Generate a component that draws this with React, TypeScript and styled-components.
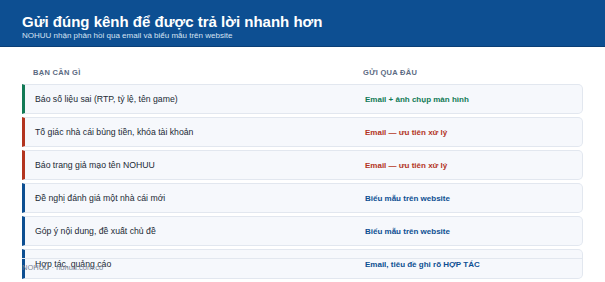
import React from 'react'
import styled, { createGlobalStyle } from 'styled-components'

const GlobalStyle = createGlobalStyle`
  html, body {
    margin: 0;
    padding: 0;
    background: #ffffff;
    font-family: "Liberation Sans", Arial, sans-serif;
  }
`

/*
 * STYLES
 */

const Page = styled.div`
  position: relative;
  width: 605px;
  height: 282px;
  overflow: hidden;
`

const Header = styled.header`
  background: #0d4f92;
  border-bottom: 1px solid #0a3f76;
  padding: 12px 22px 5px;
  height: 29px;
`

const Title = styled.h1`
  margin: 0;
  color: #ffffff;
  font-size: 15px;
  font-weight: 700;
  line-height: 19px;
`

const Subtitle = styled.p`
  margin: 0;
  color: #d6e3f3;
  font-size: 8px;
  line-height: 10px;
`

const Body = styled.main`
  padding: 21px 22px 0;
`

const HeadRow = styled.div`
  display: grid;
  grid-template-columns: 318px 1fr;
  column-gap: 12px;
  padding: 0 0 6px 11px;
`

const HeadCell = styled.div`
  font-size: 7.5px;
  font-weight: 700;
  color: #5b6a82;
  letter-spacing: 0.3px;
  text-transform: uppercase;
  line-height: 10px;
`

const List = styled.div`
  display: flex;
  flex-direction: column;
  gap: 3px;
`

const Row = styled.div<{ $accent: string }>`
  display: grid;
  grid-template-columns: 318px 1fr;
  column-gap: 12px;
  align-items: center;
  height: 28px;
  padding-left: 10px;
  background: #f6f8fc;
  border: 1px solid #e2e7ef;
  border-left: 3px solid ${(p) => p.$accent};
  border-radius: 0 5px 5px 0;
`

const Need = styled.div`
  font-size: 8.7px;
  color: #222a35;
`

const Channel = styled.div<{ $color: string }>`
  font-size: 8px;
  font-weight: 700;
  color: ${(p) => p.$color};
`

const Footer = styled.footer`
  position: absolute;
  left: 22px;
  right: 22px;
  top: 258px;
  border-top: 1px solid #e2e7ef;
  padding-top: 4px;
  font-size: 7.5px;
  color: #7a8596;
`

/*
 * DATA
 */

const GREEN = '#127a56'
const RED = '#b3341f'
const BLUE = '#0d4f92'

const rows = [
  { need: 'Báo số liệu sai (RTP, tỷ lệ, tên game)', channel: 'Email + ảnh chụp màn hình', color: GREEN },
  { need: 'Tố giác nhà cái bùng tiền, khóa tài khoản', channel: 'Email — ưu tiên xử lý', color: RED },
  { need: 'Báo trang giả mạo tên NOHUU', channel: 'Email — ưu tiên xử lý', color: RED },
  { need: 'Đề nghị đánh giá một nhà cái mới', channel: 'Biểu mẫu trên website', color: BLUE },
  { need: 'Góp ý nội dung, đề xuất chủ đề', channel: 'Biểu mẫu trên website', color: BLUE },
  { need: 'Hợp tác, quảng cáo', channel: 'Email, tiêu đề ghi rõ HỢP TÁC', color: BLUE }
]

/*
 * COMPONENT
 */

const App = () => (
  <Page>
    <GlobalStyle />
    <Header>
      <Title>Gửi đúng kênh để được trả lời nhanh hơn</Title>
      <Subtitle>NOHUU nhận phản hồi qua email và biểu mẫu trên website</Subtitle>
    </Header>
    <Body>
      <HeadRow>
        <HeadCell>Bạn cần gì</HeadCell>
        <HeadCell>Gửi qua đâu</HeadCell>
      </HeadRow>
      <List>
        {rows.map((row) => (
          <Row key={row.need} $accent={row.color}>
            <Need>{row.need}</Need>
            <Channel $color={row.color}>{row.channel}</Channel>
          </Row>
        ))}
      </List>
    </Body>
    <Footer>NOHUU · nohuu.com.co</Footer>
  </Page>
)

export default App
